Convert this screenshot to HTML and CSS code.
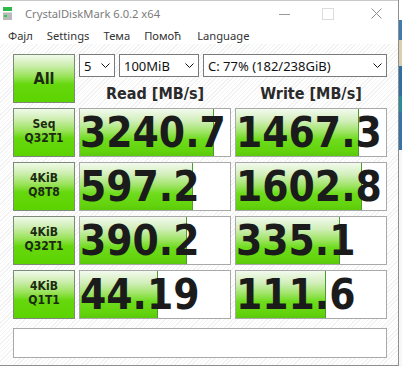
FILE: index.html
```html
<!DOCTYPE html>
<html>
<head>
<meta charset="utf-8">
<link rel="stylesheet" href="styles.css">
</head>
<body>
<div class="screen">
  <div class="window">
    <div class="titlebar">
      <svg class="appicon" width="10" height="14" viewBox="0 0 10 14">
        <rect x="0" y="0" width="9" height="4" fill="#2eb84a"/>
        <rect x="0" y="5" width="9" height="8" fill="#b9b9b9"/>
        <rect x="0" y="5" width="9" height="1" fill="#d8d8d8"/>
        <rect x="1" y="8" width="3" height="2" fill="#3bc552"/>
      </svg>
      <span class="title">CrystalDiskMark 6.0.2 x64</span>
      <span class="caption">
        <svg class="cap-min" width="11" height="10" viewBox="0 0 11 10"><path d="M0 5.5H11" stroke="#9a9a9a" stroke-width="1"/></svg>
        <svg class="cap-max" width="12" height="12" viewBox="0 0 12 12"><rect x="0.5" y="0.5" width="11" height="11" fill="none" stroke="#dcdcdc"/></svg>
        <svg class="cap-close" width="11" height="11" viewBox="0 0 11 11"><path d="M0.5 0.5L10.5 10.5M10.5 0.5L0.5 10.5" stroke="#8c8c8c" stroke-width="1"/></svg>
      </span>
    </div>
    <nav class="menubar">
      <span>Фајл</span><span>Settings</span><span>Тема</span><span>Помоћ</span><span class="lang">Language</span>
    </nav>
    <main class="content">
      <div class="grid">
        <div class="test all">All</div>
        <div class="controls">
          <div class="selects">
            <div class="sel sel-count"><span>5</span><svg width="9" height="6" viewBox="0 0 9 6"><path d="M0.5 0.5L4.5 4.5L8.5 0.5" fill="none" stroke="#111"/></svg></div>
            <div class="sel sel-size"><span>100MiB</span><svg width="9" height="6" viewBox="0 0 9 6"><path d="M0.5 0.5L4.5 4.5L8.5 0.5" fill="none" stroke="#111"/></svg></div>
            <div class="sel sel-drive"><span>C: 77% (182/238GiB)</span><svg width="9" height="6" viewBox="0 0 9 6"><path d="M0.5 0.5L4.5 4.5L8.5 0.5" fill="none" stroke="#111"/></svg></div>
          </div>
          <div class="headers">
            <div>Read [MB/s]</div>
            <div>Write [MB/s]</div>
          </div>
        </div>

        <div class="test">Seq<br>Q32T1</div>
        <div class="res" style="--w:89%">3240.7</div>
        <div class="res" style="--w:82%">1467.3</div>

        <div class="test">4KiB<br>Q8T8</div>
        <div class="res" style="--w:75%">597.2</div>
        <div class="res" style="--w:84%">1602.8</div>

        <div class="test">4KiB<br>Q32T1</div>
        <div class="res" style="--w:71%">390.2</div>
        <div class="res" style="--w:69%">335.1</div>

        <div class="test">4KiB<br>Q1T1</div>
        <div class="res" style="--w:52%">44.19</div>
        <div class="res" style="--w:60%">111.6</div>
      </div>
      <div class="comment"></div>
    </main>
  </div>
  <div class="desk"></div>
</div>
</body>
</html>
```
FILE: styles.css
```css
html, body {
  margin: 0;
  padding: 0;
  background: #ffffff;
}
.screen {
  display: flex;
  width: 402px;
  height: 367px;
  overflow: hidden;
}
.window {
  width: 398px;
  height: 365px;
  border-right: 1px solid #8f8f8f;
  border-bottom: 1px solid #8f8f8f;
  display: flex;
  flex-direction: column;
  background: #fff;
}
.desk {
  flex: 1;
  background: linear-gradient(to bottom, #ffffff 0 20px, #3d7db0 20px 40px, #d9ceb2 40px 66px, #2f70a3 66px 96px, #2b8c9a 96px 112px, #3474a8 112px 150px, #f7f7f7 150px);
}
.titlebar {
  height: 26px;
  display: flex;
  align-items: center;
  border-top: 1px solid #c8c8c8;
  box-sizing: border-box;
  font-family: "Noto Sans", sans-serif;
}
.appicon {
  margin-left: 3px;
  margin-top: 1px;
}
.title {
  margin-left: 12px;
  font-size: 11.2px;
  color: #7c7c7c;
  flex: 1;
}
.caption {
  display: flex;
  align-items: center;
  padding-right: 16px;
}
.cap-max { margin-left: 32px; }
.cap-close { margin-left: 37px; }
.menubar {
  height: 18px;
  display: flex;
  align-items: center;
  gap: 14px;
  padding-left: 8px;
  font-family: "Noto Sans", sans-serif;
  font-size: 11.2px;
  color: #333;
}
.menubar .lang { margin-left: 2px; }
.content {
  flex: 1;
  padding: 10px 0 0 13px;
  background: repeating-linear-gradient(135deg, #ffffff 0 2px, #f2f2f2 2px 3px);
}
.grid {
  display: grid;
  grid-template-columns: 62px 152px 152px;
  grid-template-rows: repeat(5, 49px);
  column-gap: 4px;
  row-gap: 5px;
}
.test {
  box-sizing: border-box;
  border: 1px solid #7c8a78;
  background: linear-gradient(to bottom, #f1faea 0%, #cdeeb0 22%, #9be35c 45%, #66d80e 62%, #5cd300 100%);
  display: flex;
  align-items: center;
  justify-content: center;
  text-align: center;
  font-family: "DejaVu Sans Condensed", "DejaVu Sans", sans-serif;
  font-stretch: condensed;
  font-weight: bold;
  font-size: 12px;
  line-height: 14px;
  color: #1c2a12;
  padding-bottom: 3px;
}
.test.all {
  font-size: 16px;
  padding-bottom: 0;
}
.controls {
  grid-column: 2 / 4;
  display: grid;
  grid-template-rows: 23px 1fr;
}
.selects {
  display: flex;
  gap: 4px;
}
.sel {
  box-sizing: border-box;
  height: 23px;
  border: 1px solid #7a7a7a;
  background: #fff;
  display: flex;
  align-items: center;
  justify-content: space-between;
  padding: 0 4px 0 4px;
  font-family: "Noto Sans", sans-serif;
  font-size: 13px;
  color: #111;
}
.sel-count { width: 36px; }
.sel-size { width: 80px; }
.sel-drive { flex: 1; }
.headers {
  display: grid;
  grid-template-columns: 152px 152px;
  column-gap: 4px;
  align-items: center;
  padding-top: 6px;
  text-align: center;
  font-family: "DejaVu Sans Condensed", "DejaVu Sans", sans-serif;
  font-stretch: condensed;
  font-weight: bold;
  font-size: 16px;
  color: #2a2a2a;
}
.res {
  box-sizing: border-box;
  border: 1px solid #a9a9a9;
  background-color: #fff;
  background-image:
    linear-gradient(#4f9a2c, #4f9a2c),
    linear-gradient(to bottom, #f3faee 0%, #d2efbb 25%, #9fe466 48%, #6edc1c 65%, #62d30c 90%, #5cc80c 100%);
  background-repeat: no-repeat;
  background-size: 1px 100%, var(--w) 100%;
  background-position: var(--w) 0, 0 0;
  display: flex;
  align-items: center;
  overflow: hidden;
  white-space: nowrap;
  font-family: "DejaVu Sans Condensed", "DejaVu Sans", sans-serif;
  font-stretch: condensed;
  font-weight: bold;
  font-size: 42px;
  line-height: 1;
  color: #1b1b1b;
  padding-left: 0;
}
.comment {
  box-sizing: border-box;
  width: 374px;
  height: 30px;
  margin-top: 9px;
  border: 1px solid #a9a9a9;
  background: #fff;
}
```
